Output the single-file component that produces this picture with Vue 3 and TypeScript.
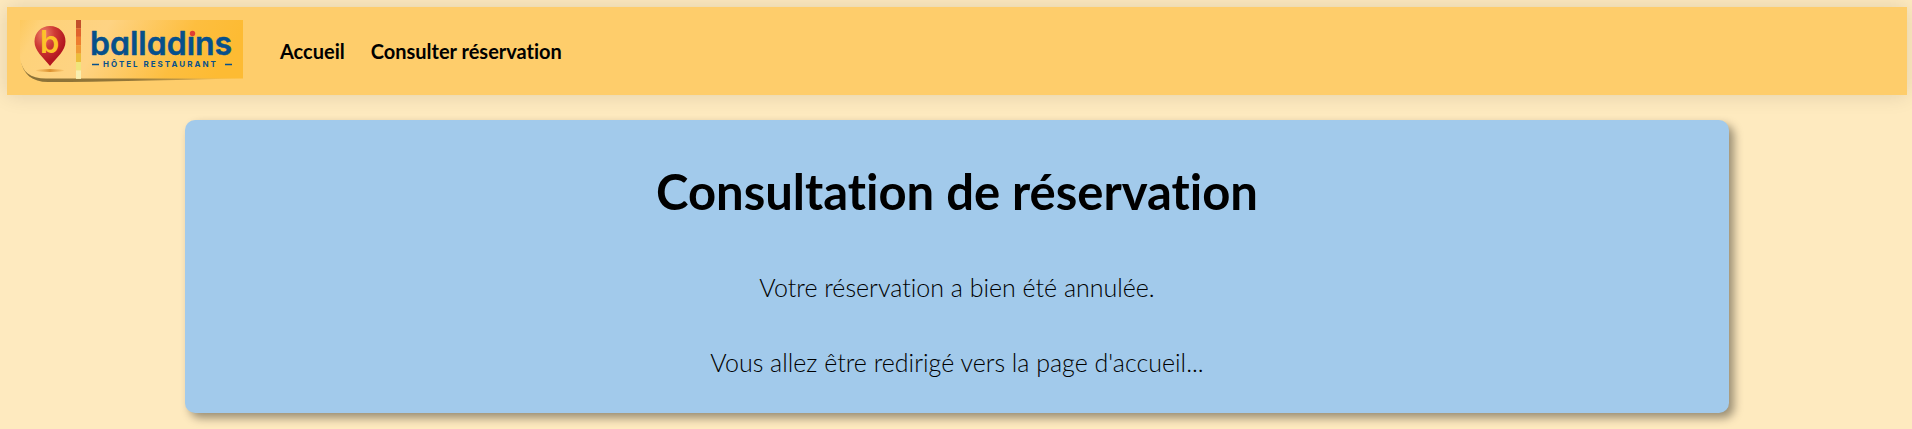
<script setup lang="ts">
interface NavLink {
  label: string
  href: string
}

const links: NavLink[] = [
  { label: 'Accueil', href: '#accueil' },
  { label: 'Consulter réservation', href: '#reservation' },
]

const stripe: string[] = ['#c24f2b', '#e0622d', '#ee7d2f', '#f09a35', '#ecbd3a', '#f0e57c', '#f9efb0']
</script>

<template>
  <div class="page">
    <header class="header">
      <a class="brand" href="#accueil" aria-label="Balladins, hôtel restaurant">
        <svg class="logo" viewBox="0 0 223 62" width="223" height="62">
          <defs>
            <linearGradient id="plate" x1="0" y1="0" x2="1" y2="0.15">
              <stop offset="0" stop-color="#fdc95f" />
              <stop offset="0.1" stop-color="#fed27a" />
              <stop offset="0.4" stop-color="#fed383" />
              <stop offset="0.78" stop-color="#fdbe3f" />
              <stop offset="1" stop-color="#fdbb33" />
            </linearGradient>
            <linearGradient id="under" x1="0" y1="0" x2="1" y2="0">
              <stop offset="0" stop-color="#8a7138" />
              <stop offset="0.5" stop-color="#947738" />
              <stop offset="1" stop-color="#fdc55a" />
            </linearGradient>
            <radialGradient id="pin" cx="0.3" cy="0.2" r="0.7">
              <stop offset="0" stop-color="#ee8268" />
              <stop offset="0.5" stop-color="#cf3b36" />
              <stop offset="1" stop-color="#b4171f" />
            </radialGradient>
            <linearGradient id="ground" x1="0" y1="0" x2="1" y2="0">
              <stop offset="0" stop-color="#e59b35" stop-opacity="0.2" />
              <stop offset="0.5" stop-color="#dc9130" />
              <stop offset="1" stop-color="#e59b35" stop-opacity="0.2" />
            </linearGradient>
          </defs>
          <path d="M1 41C3 54 12 62 28 62C84 62 150 60 223 58.500L28 57Z" fill="url(#under)" />
          <path d="M0 0H223V58.500H26C10 58.500 2 52 0 38Z" fill="url(#plate)" />
          <ellipse cx="30" cy="50.500" rx="14" ry="1.500" fill="url(#ground)" />
          <path d="M30 6C21 6 14.500 12.500 14.500 21.500C14.500 31 23 37 30 46C37 37 45.500 31 45.500 21.500C45.500 12.500 39 6 30 6Z" fill="url(#pin)" />
          <text class="pin-letter" x="20" y="33">b</text>
          <rect
            v-for="(color, index) in stripe"
            :key="color"
            x="56"
            :y="index * 8.4"
            width="5"
            height="8.500"
            :fill="color"
          />
          <text class="wordmark" x="70" y="35">balladıns</text>
          <circle cx="172.500" cy="13.500" r="2.700" fill="#e23e33" />
          <path d="M72 44.500H79M205 44.500H212" stroke="#07508b" stroke-width="1.300" />
          <text class="tagline" x="83" y="47">HÔTEL RESTAURANT</text>
        </svg>
      </a>
      <nav class="nav">
        <a v-for="link in links" :key="link.href" :href="link.href">{{ link.label }}</a>
      </nav>
    </header>

    <main class="card">
      <h1>Consultation de réservation</h1>
      <p>Votre réservation a bien été annulée.</p>
      <p>Vous allez être redirigé vers la page d'accueil...</p>
    </main>
  </div>
</template>

<style>
body {
  margin: 0;
  background: #feeabf;
}
</style>

<style scoped>
.page {
  padding: 7px 5px 16px 7px;
  color: #000;
  font-family: Lato, "Liberation Sans", sans-serif;
  font-variant-ligatures: none;
}

.header {
  display: flex;
  align-items: center;
  gap: 37px;
  padding: 13px;
  background: #fecd6b;
  box-shadow: 0 0 20px rgba(0, 0, 0, 0.12);
}

.brand,
.logo {
  display: block;
}

.pin-letter {
  font-family: Inter, sans-serif;
  font-size: 31px;
  font-weight: 600;
  fill: #fdc229;
}

.wordmark {
  font-family: Inter, sans-serif;
  font-feature-settings: "cv11";
  font-size: 32px;
  font-weight: 600;
  fill: #07508b;
  stroke: #07508b;
  stroke-width: 0.5px;
  stroke-linejoin: round;
}

.tagline {
  font-family: Inter, sans-serif;
  font-size: 8px;
  font-weight: 700;
  letter-spacing: 2px;
  fill: #07508b;
}

.nav {
  display: flex;
  flex-wrap: wrap;
  gap: 26px;
}

.nav a {
  color: #000;
  font-size: 20px;
  font-weight: 700;
  line-height: 24px;
  text-decoration: none;
}

.card {
  width: 80%;
  margin: 25px auto 0;
  padding: 39px 12px 36px;
  border-radius: 10px;
  background: #a2caeb;
  box-shadow: 5px 5px 10px rgba(0, 0, 0, 0.4);
  text-align: center;
}

h1 {
  margin: 0 0 49px;
  font-size: 49px;
  font-weight: 700;
  line-height: 64px;
}

p {
  margin: 0;
  font-size: 25px;
  font-weight: 300;
  line-height: 30px;
}

p + p {
  margin-top: 45px;
}
</style>
